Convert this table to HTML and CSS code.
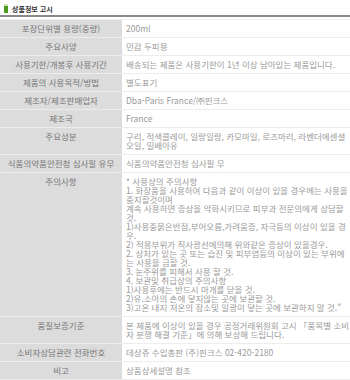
FILE: index.html
```html
<!DOCTYPE html>
<html lang="ko">
<head>
<meta charset="utf-8">
<link rel="stylesheet" href="styles.css">
</head>
<body>
<div class="head">
  <svg class="ico" width="4" height="9" viewBox="0 0 4 9"><rect x="0" y="0" width="4" height="2" fill="#cfe8b8"/><rect x="0" y="2" width="4" height="7" fill="#4f9a1c"/></svg>
  <span class="title">상품정보 고시</span>
</div>
<table class="info">
  <tr><th>포장단위별 용량(중량)</th><td>200ml</td></tr>
  <tr><th>주요사양</th><td>민감 두피용</td></tr>
  <tr><th>사용기한/개봉후 사용기간</th><td>배송되는 제품은 사용기한이 1년 이상 남아있는 제품입니다.</td></tr>
  <tr><th>제품의 사용목적/방법</th><td>별도표기</td></tr>
  <tr><th>제조자/제조판매업자</th><td>Dba-Paris France/㈜핀크스</td></tr>
  <tr><th>제조국</th><td>France</td></tr>
  <tr><th>주요성분</th><td>구리, 적색클레이, 일랑일랑, 카모마일, 로즈마리, 라벤더에센셜<br>오일, 밀배아유</td></tr>
  <tr><th>식품의약품안전청 심사필 유무</th><td>식품의약품안전청 심사필 무</td></tr>
  <tr><th>주의사항</th><td>* 사용상의 주의사항<br>1. 화장품을 사용하여 다음과 같이 이상이 있을 경우에는 사용을<br>중지할것이며<br>계속 사용하면 증상을 악화시키므로 피부과 전문의에게 상담할<br>것.<br>1)사용중붉은반점,부어오름,가려움증, 자극등의 이상이 있을 경<br>우.<br>2) 적용부위가 직사광선에의해 위와같은 증상이 있을경우.<br>2. 상처가 있는 곳 또는 습진 및 피부염등의 이상이 있는 부위에<br>는 사용을 금할 것.<br>3. 눈주위를 피해서 사용 할 것.<br>4. 보관및 취급상의 주의사항<br>1)사용후에는 반드시 마개를 닫을 것.<br>2)유.소아의 손에 닿지않는 곳에 보관할 것.<br>3)고온 내지 저온의 장소및 일광이 닿는 곳에 보관하지 말 것."</td></tr>
  <tr><th>품질보증기준</th><td>본 제품에 이상이 있을 경우 공정거래위원회 고시 「품목별 소비<br>자 분쟁 해결 기준」에 의해 보상해 드립니다.</td></tr>
  <tr><th>소비자상담관련 전화번호</th><td>데상쥬 수입총판 (주)핀크스 02-420-2180</td></tr>
  <tr><th>비고</th><td>상품상세설명 참조</td></tr>
</table>
</body>
</html>
```
FILE: styles.css
```css
html, body {
  margin: 0;
  padding: 0;
  background: #fff;
}
body {
  width: 350px;
  font-family: "Noto Sans CJK KR", "Noto Sans", sans-serif;
}
.head {
  height: 15px;
  display: flex;
  align-items: center;
  padding-left: 4px;
  gap: 4px;
  border-bottom: 2px solid #8a8a8a;
  margin-bottom: 2px;
}
.ico {
  display: block;
  margin-top: 2px;
}
.title {
  font-size: 7px;
  font-weight: bold;
  color: #333;
  line-height: 9px;
  margin-top: 3px;
}
.info {
  width: 350px;
  border-collapse: collapse;
  border-top: 1px solid #ededed;
  font-size: 8.5px;
  line-height: 9px;
}
.info th, .info td {
  padding: 4px 0 4px 0;
  border-bottom: 1px solid #ededed;
  vertical-align: top;
  white-space: nowrap;
}
.info th {
  width: 122px;
  background: #dcdcdc;
  color: #777;
  font-weight: normal;
  text-align: center;
  border-bottom-color: #ececec;
}
.info td {
  color: #9a9a9a;
  text-align: left;
  padding-left: 4px;
}
```
